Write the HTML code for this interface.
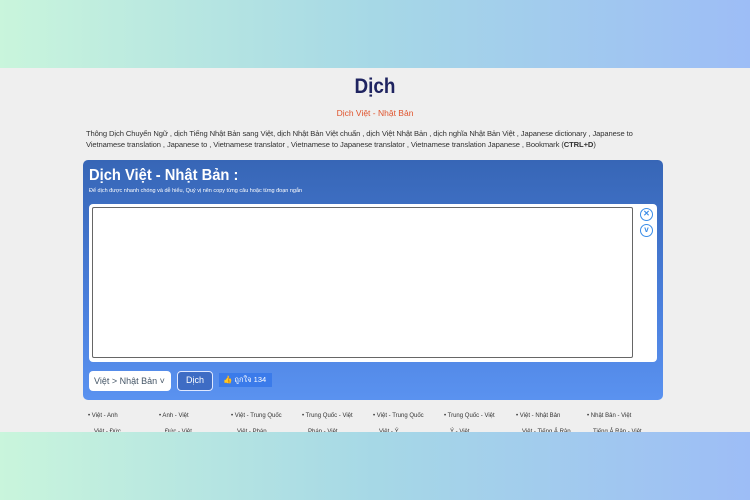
<!DOCTYPE html>
<html><head><meta charset="utf-8"><style>
*{margin:0;padding:0;box-sizing:border-box}
body{width:750px;height:500px;overflow:hidden;font-family:"Liberation Sans",sans-serif;background:#efefef;position:relative}
.band{position:absolute;left:0;width:750px;height:68px;background:linear-gradient(90deg,#c9f5dc,#a6d8e6 50%,#9dbdf6)}
.top{top:0}.bot{top:432px}
.h1{position:absolute;top:75px;left:0;width:750px;text-align:center;font-size:21px;color:#1f2460;font-weight:bold;transform:scaleX(.9)}
.sub{position:absolute;top:108px;left:0;width:750px;text-align:center;font-size:8.5px;color:#e0532c}
.desc{position:absolute;top:128px;left:86px;width:574px;font-size:7.6px;line-height:11px;color:#333;letter-spacing:-.1px}
.panel{position:absolute;left:83px;top:160px;width:580px;height:240px;border-radius:5px;background:linear-gradient(180deg,#3766b6,#4a7fdc 60%,#5a92f0)}
.pt{position:absolute;left:6px;top:7px;font-size:16px;color:#fff;font-weight:bold;transform:scaleX(.92);transform-origin:left}
.ps{position:absolute;left:6px;top:28px;font-size:5.5px;color:#fff}
.white{position:absolute;left:6px;top:44px;width:568px;height:158px;background:#fff;border-radius:4px}
.ta{position:absolute;left:3px;top:3px;width:541px;height:151px;border:1px solid #666;border-radius:2px}
.ic{position:absolute;left:551px;width:13px;height:13px;border:1.5px solid #3b8de8;border-radius:50%;color:#3b8de8;font-size:8px;font-weight:bold;text-align:center;line-height:10px}
.sel{position:absolute;left:6px;top:211px;width:82px;height:20px;background:#fff;border-radius:4px;font-size:9px;color:#456;line-height:20px;padding-left:5px}
.btn{position:absolute;left:94px;top:211px;width:36px;height:20px;border:1.5px solid #dfe8ff;border-radius:4px;background:#3e6cc4;color:#fff;font-size:9px;text-align:center;line-height:17px}
.like{position:absolute;left:136px;top:213px;width:53px;height:14px;background:#3b7bea;color:#fff;font-size:7.5px;line-height:14px;padding-left:4px}
.links{position:absolute;top:413px;left:88px;font-size:6px;color:#333}
.links span{position:absolute;white-space:nowrap}
</style></head><body>
<div class="band top"></div>
<div class="h1">Dịch</div>
<div class="sub">Dịch Việt - Nhật Bản</div>
<div class="desc">Thông Dịch Chuyển Ngữ , dịch Tiếng Nhật Bản sang Việt, dịch Nhật Bản Việt chuẩn , dịch Việt Nhật Bản , dịch nghĩa Nhật Bản Việt , Japanese dictionary , Japanese to Vietnamese translation , Japanese to , Vietnamese translator , Vietnamese to Japanese translator , Vietnamese translation Japanese , Bookmark (<b>CTRL+D</b>)</div>
<div class="panel">
<div class="pt">Dịch Việt - Nhật Bản :</div>
<div class="ps">Để dịch được nhanh chóng và dễ hiểu, Quý vị nên copy từng câu hoặc từng đoạn ngắn</div>
<div class="white"><div class="ta"></div>
<div class="ic" style="top:4px">✕</div><div class="ic" style="top:20px">v</div></div>
<div class="sel">Việt &gt; Nhật Bản ˅</div>
<div class="btn">Dịch</div>
<div class="like">👍 ถูกใจ 134</div>
</div>
<div class="links">
<span style="left:0">• Việt - Anh</span><span style="left:71px">• Anh - Việt</span><span style="left:143px">• Việt - Trung Quốc</span><span style="left:214px">• Trung Quốc - Việt</span><span style="left:285px">• Việt - Trung Quốc</span><span style="left:356px">• Trung Quốc - Việt</span><span style="left:428px">• Việt - Nhật Bản</span><span style="left:499px">• Nhật Bản - Việt</span>
</div>
<div class="links" style="top:429px">
<span style="left:6px">Việt - Đức</span><span style="left:77px">Đức - Việt</span><span style="left:149px">Việt - Pháp</span><span style="left:220px">Pháp - Việt</span><span style="left:291px">Việt - Ý</span><span style="left:362px">Ý - Việt</span><span style="left:434px">Việt - Tiếng Ả Rập</span><span style="left:505px">Tiếng Ả Rập - Việt</span>
</div>
<div class="band bot"></div>
</body></html>
